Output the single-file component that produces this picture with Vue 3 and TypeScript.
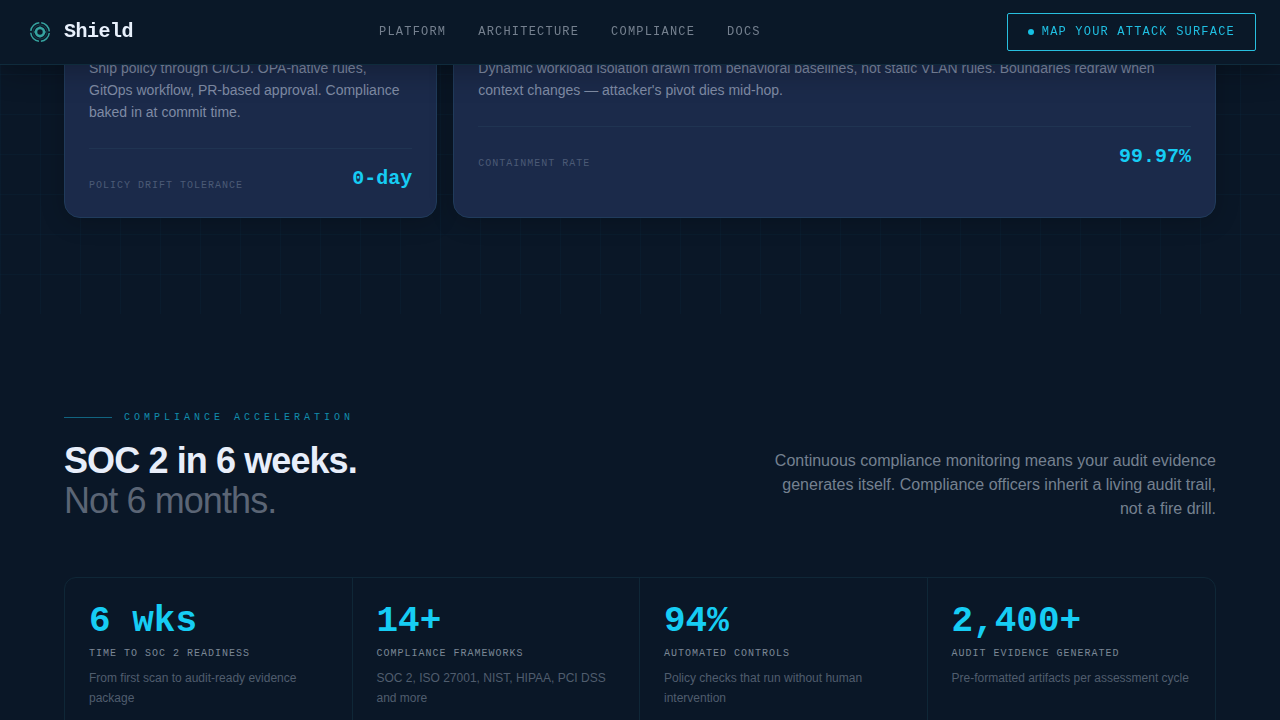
<script setup lang="ts">
interface Stat {
  value: string
  label: string
  detail: string
}

const links: string[] = ['Platform', 'Architecture', 'Compliance', 'Docs']

const capabilities = [
  {
    text: 'Ship policy through CI/CD. OPA-native rules, GitOps workflow, PR-based approval. Compliance baked in at commit time.',
    label: 'Policy drift tolerance',
    value: '0-day',
    wide: false,
  },
  {
    text: "Dynamic workload isolation drawn from behavioral baselines, not static VLAN rules. Boundaries redraw when context changes — attacker's pivot dies mid-hop.",
    label: 'Containment rate',
    value: '99.97%',
    wide: true,
  },
]

const stats: Stat[] = [
  { value: '6 wks', label: 'Time to SOC 2 readiness', detail: 'From first scan to audit-ready evidence package' },
  { value: '14+', label: 'Compliance frameworks', detail: 'SOC 2, ISO 27001, NIST, HIPAA, PCI DSS and more' },
  { value: '94%', label: 'Automated controls', detail: 'Policy checks that run without human intervention' },
  { value: '2,400+', label: 'Audit evidence generated', detail: 'Pre-formatted artifacts per assessment cycle' },
]
</script>

<template>
  <div class="page">
    <header class="bar">
      <a class="brand" href="#">
        <svg class="mark" viewBox="0 0 32 32" aria-hidden="true">
          <g fill="none" stroke="#36a39f">
            <circle cx="16" cy="16" r="9.3" stroke-width="1.5" stroke-dasharray="12.6 2" stroke-dashoffset="-1" />
            <circle cx="16" cy="16" r="7" stroke-width="1" opacity="0.25" />
            <circle cx="16" cy="16" r="4" stroke-width="2.6" />
            <path d="M16 10.4v1.6M16 20v1.6M10.4 16h1.6M20 16h1.6" stroke-width="1.4" />
          </g>
        </svg>
        <span>Shield</span>
      </a>
      <nav class="links" aria-label="Main">
        <a v-for="link in links" :key="link" href="#">{{ link }}</a>
      </nav>
      <button class="cta" type="button"><span class="dot"></span>Map your attack surface</button>
    </header>

    <main>
      <section class="capabilities">
        <div class="cards">
          <article v-for="item in capabilities" :key="item.label" class="card" :class="{ wide: item.wide }">
            <p>{{ item.text }}</p>
            <div class="metric">
              <span class="metric-label">{{ item.label }}</span>
              <strong>{{ item.value }}</strong>
            </div>
          </article>
        </div>
      </section>

      <section class="compliance">
        <div class="eyebrow">Compliance acceleration</div>
        <div class="intro">
          <h2>SOC 2 in 6 weeks.<br /><span>Not 6 months.</span></h2>
          <p>
            Continuous compliance monitoring means your audit evidence generates itself. Compliance officers inherit a
            living audit trail, not a fire drill.
          </p>
        </div>
        <div class="stats">
          <div v-for="stat in stats" :key="stat.label" class="stat">
            <strong>{{ stat.value }}</strong>
            <span class="stat-label">{{ stat.label }}</span>
            <p>{{ stat.detail }}</p>
          </div>
        </div>
      </section>
    </main>
  </div>
</template>

<style>
body {
  margin: 0;
  background: #0a1727;
}
</style>

<style scoped>
.page {
  --mono: "Liberation Mono", "Courier New", monospace;
  --cyan: #16cdf4;
  --gutter: 64px;
  min-height: 100vh;
  color: #e8eefa;
  font-family: "Liberation Sans", Arial, sans-serif;
}

p,
h2 {
  margin: 0;
}

.bar {
  position: fixed;
  z-index: 10;
  top: 0;
  left: 0;
  right: 0;
  display: flex;
  align-items: center;
  justify-content: space-between;
  height: 64px;
  padding: 0 24px;
  background: #0a1828;
  border-bottom: 1px solid #0f2b3c;
  box-shadow: 0 4px 32px rgba(0, 0, 0, 0.3);
}

.brand {
  display: flex;
  align-items: center;
  gap: 8px;
  color: #e8f0fc;
  font: 700 20px/28px var(--mono);
  letter-spacing: -0.025em;
  text-decoration: none;
}

.mark {
  width: 32px;
  height: 32px;
}

.links {
  display: flex;
  gap: 32px;
}

.links a {
  color: #75808f;
  font: 12px/16px var(--mono);
  letter-spacing: 0.1em;
  text-decoration: none;
  text-transform: uppercase;
}

.cta {
  display: flex;
  align-items: center;
  gap: 8px;
  height: 38px;
  padding: 0 20px;
  border: 1px solid #28bfdf;
  border-radius: 2px;
  background: transparent;
  color: #20bfe2;
  font: 12px/16px var(--mono);
  letter-spacing: 0.1em;
  text-transform: uppercase;
}

.dot {
  width: 6px;
  height: 6px;
  border-radius: 50%;
  background: #16c0e4;
}

.capabilities {
  padding: 0 var(--gutter) 96px;
  background-image:
    linear-gradient(to right, rgba(0, 212, 255, 0.028) 1px, transparent 1px),
    linear-gradient(to bottom, rgba(0, 212, 255, 0.028) 1px, transparent 1px);
  background-position: 0 34px;
  background-size: 40px 40px;
}

.cards {
  display: grid;
  grid-template-columns: repeat(3, 1fr);
  gap: 16px;
}

.card {
  padding: 56px 24px 24px;
  border: 1px solid #203b5b;
  border-radius: 16px;
  background: #1b2a4a;
  box-shadow: 0 4px 24px rgba(0, 0, 0, 0.2);
}

.wide {
  grid-column: span 2;
}

.card p {
  color: #7f8ba4;
  font-size: 14px;
  line-height: 22px;
}

.metric {
  display: flex;
  align-items: flex-end;
  justify-content: space-between;
  margin-top: 25px;
  padding-top: 16px;
  border-top: 1px solid #203452;
}

.metric strong {
  color: var(--cyan);
  font: 700 20px/28px var(--mono);
}

.metric-label {
  color: #4b5a76;
  font: 10px/15px var(--mono);
  letter-spacing: 1px;
  text-transform: uppercase;
}

.compliance {
  padding: 96px var(--gutter);
}

.eyebrow {
  display: flex;
  align-items: center;
  gap: 12px;
  margin-bottom: 16px;
  color: #128cac;
  font: 10px/15px var(--mono);
  letter-spacing: 4px;
  text-transform: uppercase;
}

.eyebrow::before {
  content: "";
  width: 48px;
  height: 1px;
  background: #116480;
}

.intro {
  display: flex;
  align-items: flex-end;
  justify-content: space-between;
  gap: 32px;
  margin-bottom: 56px;
}

.intro h2 {
  color: #e8eefa;
  font-size: 36px;
  line-height: 40px;
  letter-spacing: -0.025em;
}

.intro h2 span {
  color: #5b6575;
  font-weight: 400;
}

.intro p {
  max-width: 448px;
  color: #758190;
  font-size: 16px;
  line-height: 24px;
  text-align: right;
}

.stats {
  display: grid;
  grid-template-columns: repeat(4, 1fr);
  overflow: hidden;
  border: 1px solid #0f2737;
  border-radius: 12px;
}

.stat {
  display: flex;
  flex-direction: column;
  padding: 24px;
}

.stat:not(:last-child) {
  border-right: 1px solid #0f2737;
}

.stat strong {
  color: var(--cyan);
  font: 700 36px/40px var(--mono);
}

.stat-label {
  margin: 4px 0 7px;
  color: #7b8796;
  font: 10px/15px var(--mono);
  letter-spacing: 1px;
  text-transform: uppercase;
}

.stat p {
  color: #505d6e;
  font-size: 12px;
  line-height: 20px;
}
</style>
